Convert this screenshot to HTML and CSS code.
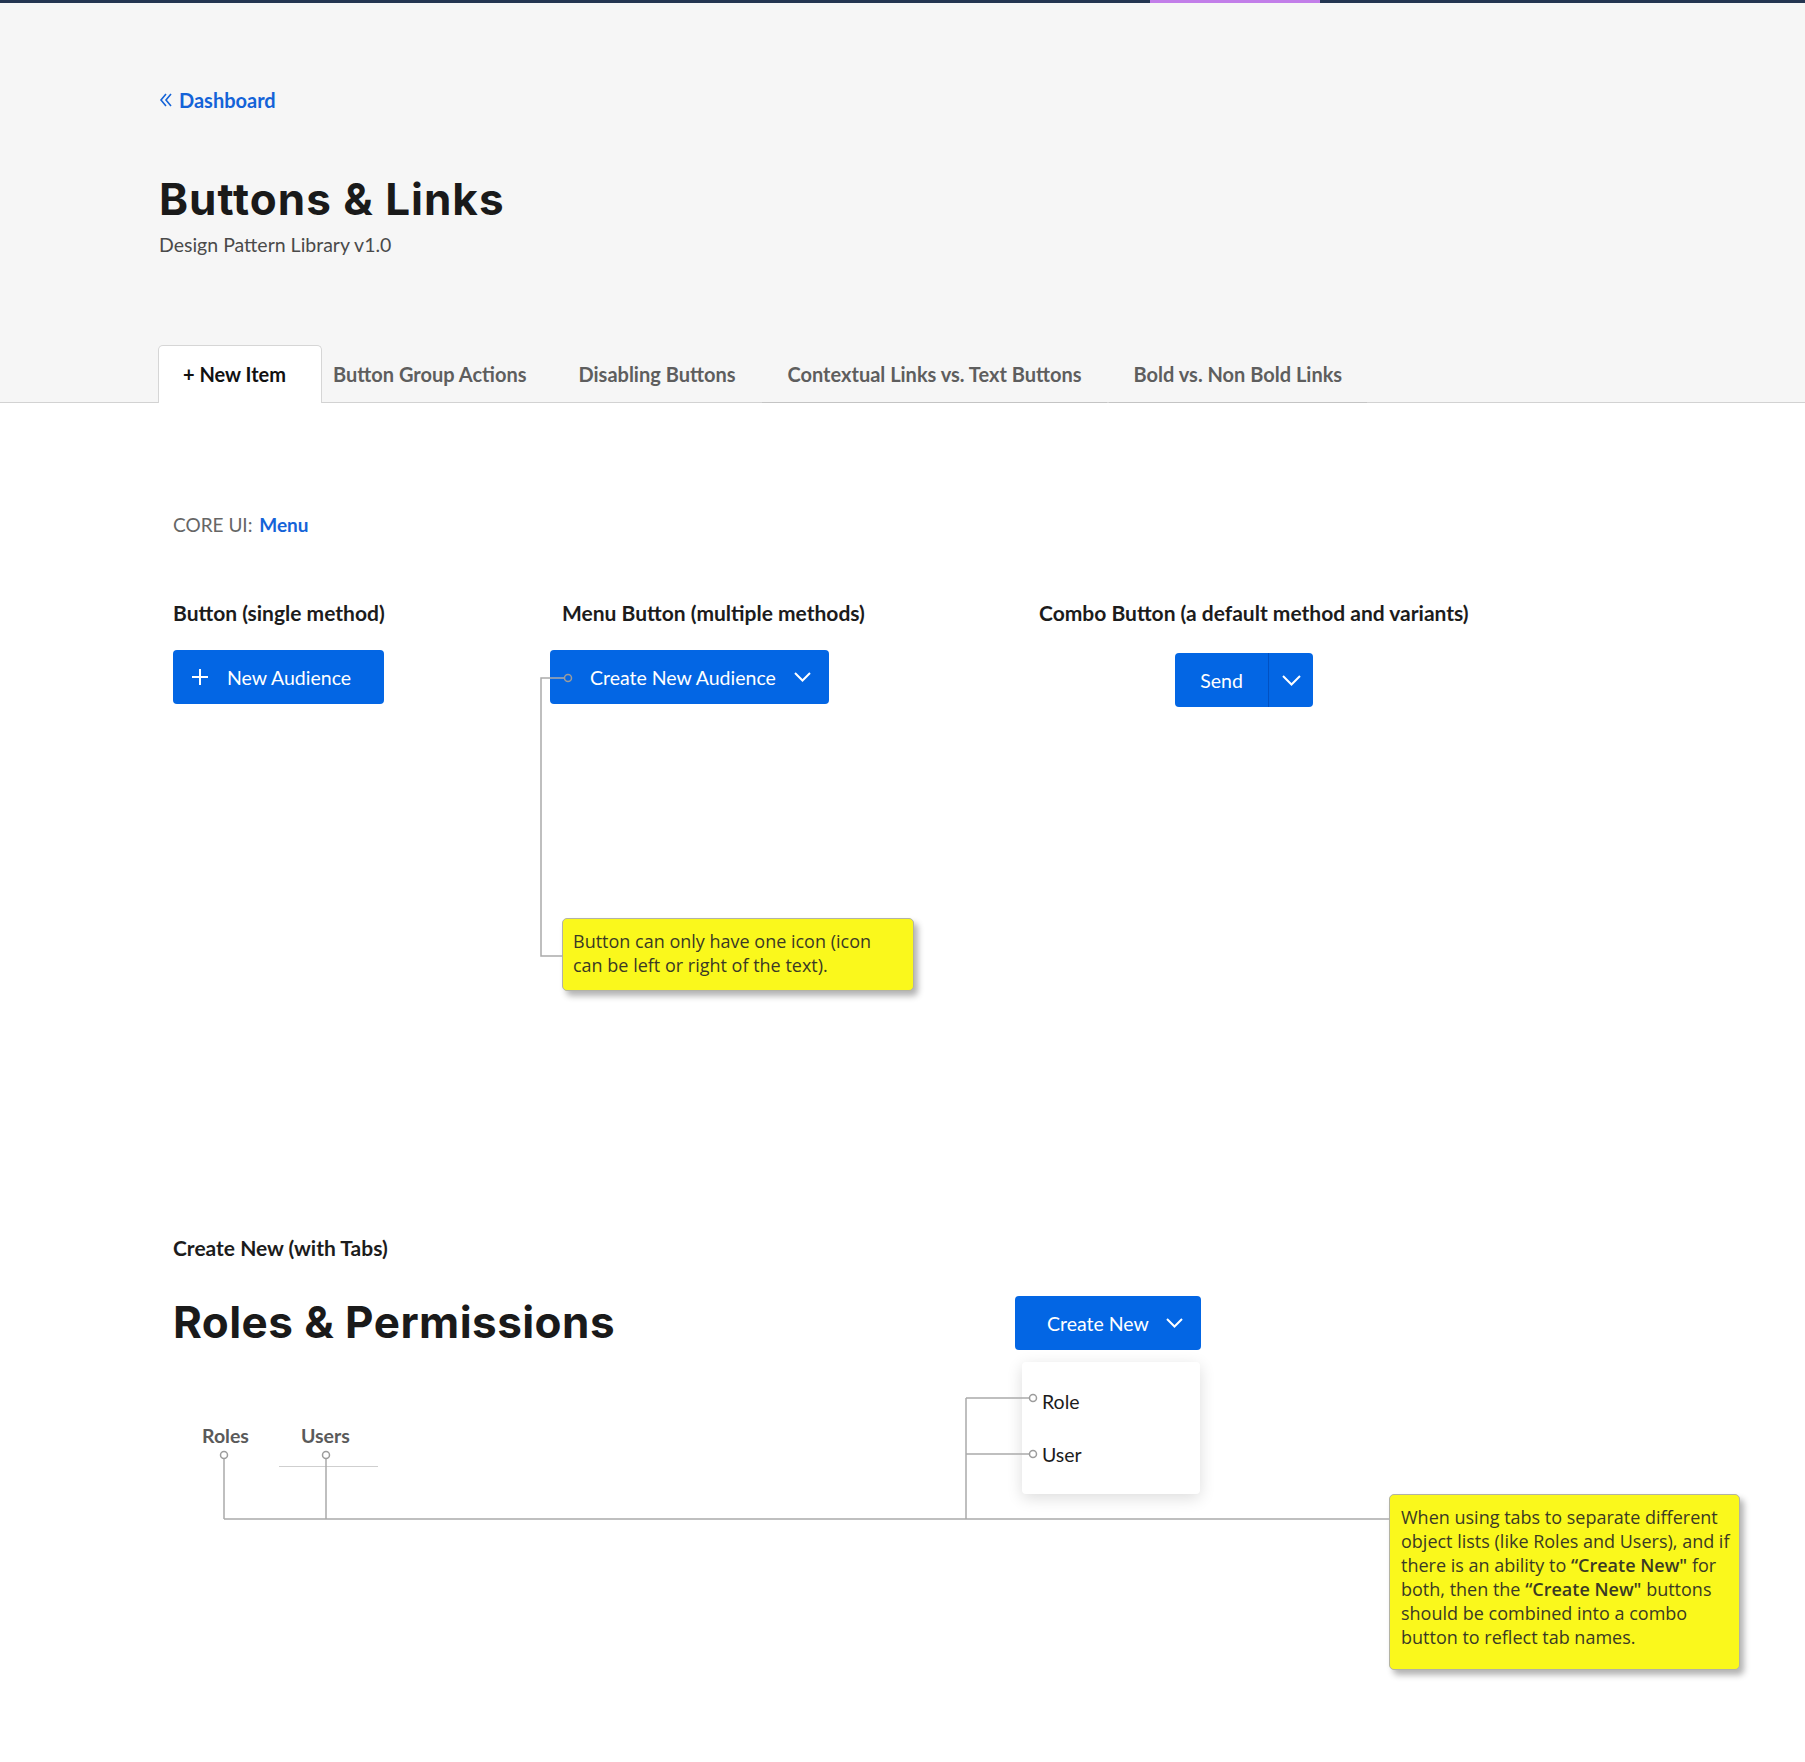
FILE: index.html
```html
<!DOCTYPE html>
<html lang="en">
<head>
    <meta charset="UTF-8">
    <meta name="viewport" content="width=device-width, initial-scale=1.0">
    <title>Buttons &amp; Links</title>
    <link rel="stylesheet" href="styles.css">
</head>
<body>

    <div class="topbar"><span class="topbar-accent"></span></div>

    <header class="header">
        <a class="back-link" href="#">
            <svg width="13" height="16" viewBox="0 0 13 16"><path d="M7 2 L2 8 L7 14 M12 2 L7 8 L12 14" fill="none" stroke="currentColor" stroke-width="1.6"/></svg>
            Dashboard
        </a>
        <h1 class="page-title">Buttons &amp; Links</h1>
        <p class="page-subtitle">Design Pattern Library v1.0</p>

        <!-- Pattern tabs -->
        <nav class="tabs">
            <a class="tab active" href="#">+ New Item</a>
            <a class="tab second" href="#">Button Group Actions</a>
            <a class="tab" href="#">Disabling Buttons</a>
            <a class="tab lined" href="#">Contextual Links vs. Text Buttons</a>
            <a class="tab lined" href="#">Bold vs. Non Bold Links</a>
        </nav>
    </header>

    <main class="content">
        <p class="core-ui">CORE UI: <a href="#">Menu</a></p>

        <div class="patterns">
            <div class="pattern">
                <h3>Button (single method)</h3>
                <button class="btn btn-icon">
                    <svg width="18" height="18" viewBox="0 0 18 18"><path d="M9 1 V17 M1 9 H17" stroke="#fff" stroke-width="2"/></svg>
                    New Audience
                </button>
            </div>

            <div class="pattern pattern-menu">
                <h3>Menu Button (multiple methods)</h3>
                <button class="btn btn-menu">
                    Create New Audience
                    <svg width="17" height="10" viewBox="0 0 17 10"><path d="M1 1 L8.5 8.5 L16 1" fill="none" stroke="#fff" stroke-width="2"/></svg>
                </button>
                <div class="note note-icon">Button can only have one icon (icon<br>can be left or right of the text).</div>
            </div>

            <div class="pattern">
                <h3>Combo Button (a default method and variants)</h3>
                <div class="combo">
                    <button class="combo-main">Send</button>
                    <button class="combo-toggle">
                        <svg width="19" height="11" viewBox="0 0 19 11"><path d="M1 1 L9.5 9.5 L18 1" fill="none" stroke="#fff" stroke-width="2"/></svg>
                    </button>
                </div>
            </div>
        </div>

        <!-- Create new with tabs -->
        <section class="tabs-example">
            <h3>Create New (with Tabs)</h3>
            <div class="example-head">
                <h2 class="example-title">Roles &amp; Permissions</h2>
                <div class="dropdown">
                    <button class="btn btn-create">
                        Create New
                        <svg width="17" height="10" viewBox="0 0 17 10"><path d="M1 1 L8.5 8.5 L16 1" fill="none" stroke="#fff" stroke-width="2"/></svg>
                    </button>
                    <ul class="dropdown-menu">
                        <li>Role</li>
                        <li>User</li>
                    </ul>
                </div>
            </div>
            <div class="sub-tabs">
                <span class="sub-tab">Roles</span>
                <span class="sub-tab lined">Users</span>
            </div>
            <div class="note note-tabs">When using tabs to separate different<br>object lists (like Roles and Users), and if<br>there is an ability to <b>&ldquo;Create New"</b> for<br>both, then the <b>&ldquo;Create New"</b> buttons<br>should be combined into a combo<br>button to reflect tab names.</div>
        </section>
    </main>

    <!-- Annotation connectors -->
    <svg class="annotations" width="1805" height="1762" viewBox="0 0 1805 1762">
        <g fill="none" stroke="#aaaaaa" stroke-width="1.5">
            <path d="M564 678 H541 V956 H563"/>
            <path d="M224 1459 V1519 M326 1459 V1519 M224 1519 H1389"/>
            <path d="M966 1398 V1519 M966 1398 H1029 M966 1454 H1029"/>
        </g>
        <g fill="none" stroke="#9c9c9c" stroke-width="1.5">
            <circle cx="568" cy="678" r="3.5"/>
            <circle cx="224" cy="1455" r="3.5"/>
            <circle cx="326" cy="1455" r="3.5"/>
            <circle cx="1033" cy="1398" r="3.5"/>
            <circle cx="1033" cy="1454" r="3.5"/>
        </g>
    </svg>
</body>
</html>
```

FILE: styles.css
```css
body {
    margin: 0;
    font-family: Lato, "Liberation Sans", sans-serif;
    background-color: #fff;
    color: #1c1c1c;
    position: relative;
    min-height: 1762px;
}

a {
    text-decoration: none;
}

.topbar {
    height: 3px;
    background-color: #243551;
}

.topbar-accent {
    display: block;
    width: 170px;
    height: 3px;
    margin-left: 1150px;
    background-color: #c27ee9;
}

.header {
    background-color: #f6f6f6;
    padding: 85px 0 0 159px;
    border-bottom: 1px solid #d2d2d2;
}

.back-link {
    display: inline-flex;
    align-items: center;
    gap: 7px;
    color: #1463d8;
    font-size: 20px;
    font-weight: 700;
    line-height: 24px;
}

.page-title {
    margin: 61px 0 0;
    font-family: Inter, "Liberation Sans", sans-serif;
    font-size: 44px;
    font-weight: 700;
    line-height: 53px;
    letter-spacing: 1px;
    color: #1a1a1a;
}

.page-subtitle {
    margin: 7px 0 0;
    font-size: 19.5px;
    line-height: 24px;
    color: #4a4a4a;
}

.tabs {
    display: flex;
    margin: 88px 0 -1px -1px;
}

.tab {
    padding: 16px 25px 17px;
    border: 1px solid transparent;
    border-bottom: 0;
    font-size: 20px;
    font-weight: 700;
    line-height: 24px;
    color: #5e5e5e;
}

.tab.active {
    padding-left: 24px;
    padding-right: 35px;
    background-color: #fff;
    border-color: #d6d6d6;
    border-radius: 5px 5px 0 0;
    color: #111;
    position: relative;
}

.tab.second {
    padding-left: 10px;
}

.tab.lined {
    box-shadow: inset 0 -1px 0 #c4c4c4;
}

.content {
    padding: 110px 0 0 173px;
}

.core-ui {
    margin: 0;
    font-size: 19px;
    line-height: 24px;
    color: #666;
}

.core-ui a {
    margin-left: 2px;
    color: #1463d8;
    font-weight: 700;
}

.patterns {
    display: grid;
    grid-template-columns: 377px 489px auto;
    margin-top: 64px;
}

.pattern h3,
.tabs-example h3 {
    margin: 0;
    font-size: 21px;
    font-weight: 700;
    line-height: 24px;
    color: #1c1c1c;
}

.pattern-menu h3 {
    padding-left: 12px;
}

.btn {
    display: inline-flex;
    align-items: center;
    height: 54px;
    border: 0;
    border-radius: 4px;
    background-color: #0366e4;
    color: #fff;
    font-family: Lato, "Liberation Sans", sans-serif;
    font-size: 19.5px;
}

.pattern .btn {
    margin-top: 25px;
}

.btn-icon {
    gap: 18px;
    padding: 0 33px 0 18px;
}

.btn-menu {
    gap: 18px;
    padding: 0 18px 0 40px;
}

.btn-create {
    gap: 17px;
    padding: 0 18px 0 32px;
}

.combo {
    display: flex;
    margin: 28px 0 0 136px;
}

.combo button {
    height: 54px;
    border: 0;
    background-color: #0366e4;
    color: #fff;
    font-family: Lato, "Liberation Sans", sans-serif;
    font-size: 19.5px;
}

.combo-main {
    width: 94px;
    border-radius: 4px 0 0 4px;
    border-right: 1px solid #0151c2 !important;
}

.combo-toggle {
    width: 44px;
    border-radius: 0 4px 4px 0;
    display: flex;
    align-items: center;
    justify-content: center;
}

.note {
    background-color: #faf81c;
    border: 1px solid #b3b3a4;
    border-radius: 5px;
    box-shadow: 4px 5px 6px rgba(0, 0, 0, 0.3);
    font-family: "Open Sans", "Liberation Sans", sans-serif;
    font-size: 18px;
    line-height: 24px;
    color: #3a3a24;
    box-sizing: border-box;
}

.note b {
    font-weight: 600;
}

.note-icon {
    width: 352px;
    height: 73px;
    margin: 214px 0 0 12px;
    padding: 10px 0 0 10px;
}

.tabs-example {
    margin-top: 245px;
}

.example-head {
    display: flex;
    align-items: flex-start;
    margin-top: 36px;
}

.example-title {
    flex: 0 0 842px;
    margin: 0;
    font-family: Inter, "Liberation Sans", sans-serif;
    font-size: 44px;
    font-weight: 700;
    line-height: 53px;
    letter-spacing: 0.45px;
    color: #1a1a1a;
}

.dropdown {
    position: relative;
}

.dropdown-menu {
    position: absolute;
    top: 66px;
    left: 7px;
    width: 178px;
    margin: 0;
    padding: 13px 0;
    list-style: none;
    background-color: #fff;
    border-radius: 4px;
    box-shadow: 0 4px 16px rgba(0, 0, 0, 0.14);
}

.dropdown-menu li {
    padding-left: 20px;
    font-size: 19.5px;
    line-height: 53px;
    color: #1c1c1c;
}

.sub-tabs {
    display: flex;
    gap: 8px;
    margin-top: 74px;
}

.sub-tab {
    padding: 0 22px 18px 29px;
    font-size: 19.5px;
    font-weight: 700;
    line-height: 24px;
    color: #5a5a5a;
    border-bottom: 1px solid transparent;
}

.sub-tab.lined {
    padding-left: 22px;
    padding-right: 28px;
    border-bottom-color: #cfcfcf;
}

.note-tabs {
    width: 351px;
    height: 176px;
    margin: 27px 0 0 1216px;
    padding: 10px 0 0 11px;
}

.annotations {
    position: absolute;
    top: 0;
    left: 0;
    pointer-events: none;
}
```
